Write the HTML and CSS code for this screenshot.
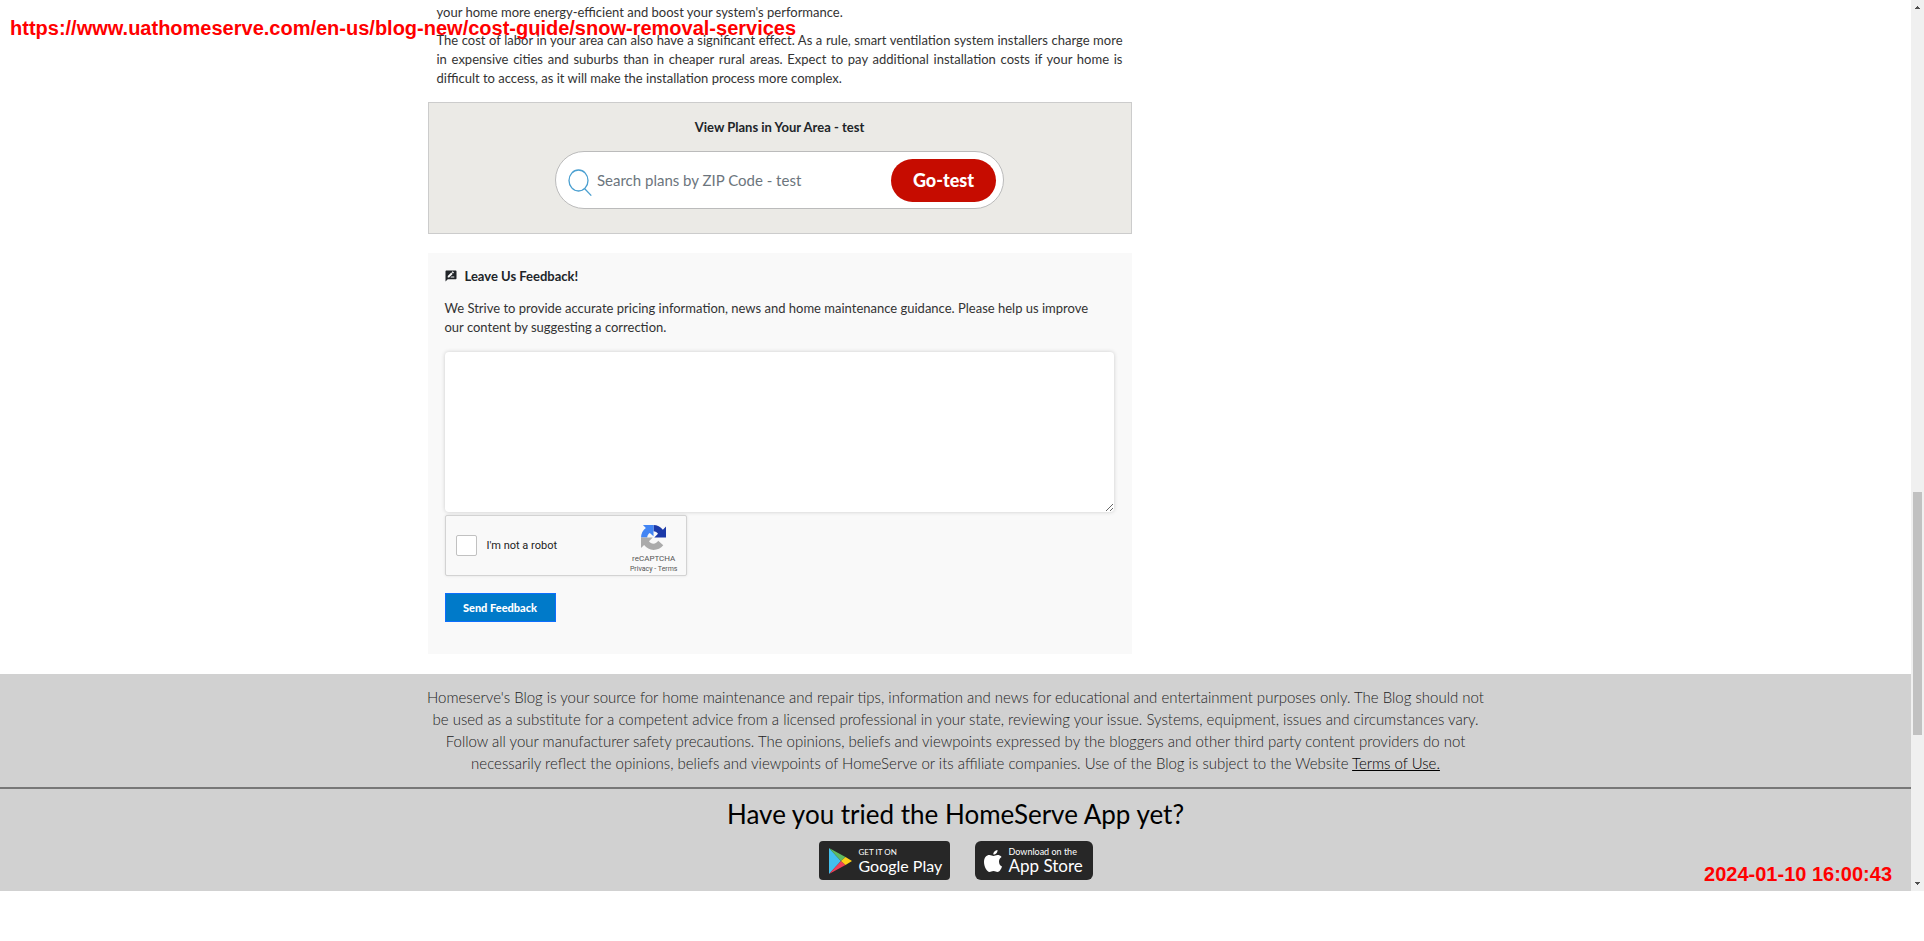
FILE: index.html
```html
<!DOCTYPE html>
<html lang="en">
<head>
<meta charset="utf-8">
<title>HomeServe Cost Guide</title>
<link rel="stylesheet" href="styles.css">
</head>
<body>
<div class="shell">
  <div class="page">
    <main class="container">
      <article class="article">
        <div class="copy">
          <p>prices, and the right system may pay for itself over a few years by helping to improve upgrades. You can make<br>your home more energy-efficient and boost your system's performance.</p>
          <p>The cost of labor in your area can also have a significant effect. As a rule, smart ventilation system installers charge more in expensive cities and suburbs than in cheaper rural areas. Expect to pay additional installation costs if your home is difficult to access, as it will make the installation process more complex.</p>
        </div>
        <section class="plans">
          <h2 class="box-title">View Plans in Your Area - test</h2>
          <form class="search">
            <svg class="search-icon" viewBox="0 0 24 27" fill="none" stroke="#4a9fd0" stroke-width="1.3"><ellipse cx="10.5" cy="11.5" rx="9.5" ry="10.5"/><path d="M16.5 19.5L23.3 26.6"/></svg>
            <input class="search-input" type="text" aria-label="ZIP Code" placeholder="Search plans by ZIP Code - test">
            <button class="go" type="button">Go-test</button>
          </form>
        </section>
        <form class="feedback">
          <h2 class="box-title feedback-title">
            <svg class="feedback-icon" viewBox="0 0 24 24" fill="#212529"><path d="M21 1H3C1.900 1 1 1.900 1 3V23L5.500 18.500H21C22.100 18.500 23 17.600 23 16.500V3C23 1.900 22.100 1 21 1ZM5.500 15V12.200L12.500 5.200L15.300 8L8.300 15ZM16.200 7.100L13.400 4.300L14.800 2.900C15.100 2.600 15.500 2.600 15.800 2.900L17.600 4.700C17.900 5 17.900 5.400 17.600 5.700ZM18.500 15H10.800L12.800 13H18.500Z"/></svg>
            <label for="comment">Leave Us Feedback!</label>
          </h2>
          <p class="feedback-text">We Strive to provide accurate pricing information, news and home maintenance guidance. Please help us improve<br>our content by suggesting a correction.</p>
          <textarea class="comment" id="comment"></textarea>
          <div class="captcha">
            <label class="robot"><input class="robot-box" type="checkbox">I'm not a robot</label>
            <div class="captcha-brand">
              <svg class="captcha-logo" viewBox="0 0 64 64"><path fill="#1c3aa9" d="M64 32V4l-8 8C50 5 41.500 0 32 0v16c5 0 9 3 11.500 6.500L34 32Z"/><path fill="#4285f4" d="M32 0H5l7.500 7.500C5 13 0 21.500 0 32h16c0-5 2.500-9 6.500-11.500L32 29Z"/><path fill="#ababab" d="M0 32v27l8-7.500C14 59 22.500 64 32 64c10 0 19-4.500 25-12L44 40.500C41 45 37 48 32 48s-9-3-11.500-6.500L30 32Z"/></svg>
              <span class="captcha-name">reCAPTCHA</span>
              <span class="captcha-links"><a href="#">Privacy</a> - <a href="#">Terms</a></span>
            </div>
          </div>
          <button class="send" type="button">Send Feedback</button>
        </form>
      </article>
    </main>
    <footer class="footer">
      <p class="disclaimer">Homeserve's Blog is your source for home maintenance and repair tips, information and news for educational and entertainment purposes only. The Blog should not<br>be used as a substitute for a competent advice from a licensed professional in your state, reviewing your issue. Systems, equipment, issues and circumstances vary.<br>Follow all your manufacturer safety precautions. The opinions, beliefs and viewpoints expressed by the bloggers and other third party content providers do not<br>necessarily reflect the opinions, beliefs and viewpoints of HomeServe or its affiliate companies. Use of the Blog is subject to the Website <a href="#">Terms of Use.</a></p>
      <div class="apps">
        <h2 class="apps-title">Have you tried the HomeServe App yet?</h2>
        <div class="badges">
          <a class="badge badge-google" href="#">
            <svg class="play-icon" viewBox="0 0 24 26"><path fill="#43c0ee" d="M1 0L13 13L1 26Z"/><path fill="#5fbb62" d="M1 0L17.500 9L13 13Z"/><path fill="#f04058" d="M1 26L17.500 17L13 13Z"/><path fill="#fdd017" d="M17.500 9L24 13L17.500 17L13 13Z"/></svg>
            <span class="badge-text"><span class="badge-small">GET IT ON</span><span class="badge-big">Google Play</span></span>
          </a>
          <a class="badge badge-apple" href="#">
            <svg class="apple-icon" viewBox="0 0 18 22" fill="#fff"><path d="M15 11.500c0-2.300 1.200-3.600 2.600-4.500C16.500 5.500 15 5 13.500 5c-1.700 0-3 1-4 1S7 5 5.500 5C2.500 5 0 7.500 0 12c0 4.500 3 10 5.500 10 1.500 0 2-.9 4-.9s2.500.9 4 .9c2 0 3.700-3 4.500-5.500-1.800-.8-3-2.500-3-5Z"/><path d="M13.500 0c.2 2.500-1.800 4.600-4.200 4.500C9 2.300 11.200.200 13.500 0Z"/></svg>
            <span class="badge-text"><span class="badge-small badge-wide">Download on the</span><span class="badge-big badge-store">App Store</span></span>
          </a>
        </div>
      </div>
    </footer>
  </div>
  <div class="scrollbar" aria-hidden="true">
    <svg class="arrow" viewBox="0 0 5 3"><path d="M0 3V2H1V1H2V0H3V1H4V2H5V3Z"/></svg>
    <div class="track"><div class="thumb"></div></div>
    <svg class="arrow" viewBox="0 0 5 3"><path d="M0 0V1H1V2H2V3H3V2H4V1H5V0Z"/></svg>
  </div>
  <div class="stamp stamp-url">https://www.uathomeserve.com/en-us/blog-new/cost-guide/snow-removal-services</div>
  <div class="stamp stamp-time">2024-01-10 16:00:43</div>
</div>
</body>
</html>
```
FILE: styles.css
```css
* { box-sizing: border-box; }
body { margin: 0; overflow: hidden; background: #fff; color: #333; font-family: Lato, "Open Sans", sans-serif; font-size: 13px; line-height: 19px; }
h2, p { margin: 0; }
button, input, textarea { font-family: inherit; }
.shell { position: relative; display: flex; overflow: hidden; }
.page { flex: 1; min-width: 0; }
.container { max-width: 1056px; margin: 0 auto; display: grid; grid-template-columns: 2fr 1fr; }
.copy { margin-top: -16px; padding: 0 9px; text-align: justify; }
.copy p { margin-bottom: 9px; line-height: 19px; }
.plans { margin-top: 14px; padding: 14px 0 24px; border: 1px solid #ccc; background: #ebeae6; }
.box-title { font-size: 13px; line-height: 20px; font-weight: 700; color: #212529; }
.plans .box-title { text-align: center; }
.search { display: flex; align-items: center; width: 449px; height: 58px; margin: 14px auto 0; padding: 0 7px 0 12px; border: 1px solid #bbb; border-radius: 29px; background: #fff; }
.search-icon { width: 24px; height: 27px; margin-top: 4px; }
.search-input { flex: 1; min-width: 0; border: 0; padding: 0 5px; background: none; font-size: 15px; outline: 0; }
.search-input::placeholder { color: #6c757d; }
.go { width: 105px; height: 43px; border: 0; border-radius: 22px; background: #c60c00; color: #fff; font-size: 18px; font-weight: 900; }
.feedback { margin-top: 19px; padding: 13px 18px 32px 17px; background: #f9f9f9; }
.feedback-title { display: flex; align-items: center; gap: 8px; }
.feedback-icon { width: 12px; height: 12px; }
.feedback-text { margin: 13px 0 15px; line-height: 19px; }
.comment { display: block; width: 100%; height: 160px; border: 0; border-radius: 4px; background: #fff; box-shadow: 0 0 4px rgba(0,0,0,.18); resize: vertical; }
.captcha { display: flex; justify-content: space-between; width: 242px; height: 61px; margin-top: 3px; padding: 0 8px 0 10px; border: 1px solid #d3d3d3; border-radius: 2px; background: #f9f9f9; box-shadow: 0 0 3px rgba(0,0,0,.1); font-family: Roboto, sans-serif; color: #222; }
.robot { display: flex; align-items: center; gap: 10px; font-size: 11px; }
.robot-box { appearance: none; width: 21px; height: 21px; margin: 0; border: 1px solid #c1c1c1; border-radius: 2px; background: #fff; }
.captcha-brand { display: flex; flex-direction: column; align-items: center; padding-top: 9px; color: #555; }
.captcha-logo { width: 25px; height: 25px; }
.captcha-name { margin-top: 4px; font-size: 8px; line-height: 10px; }
.captcha-links { font-size: 7px; line-height: 10px; }
.captcha-links a { color: inherit; text-decoration: none; }
.send { display: block; width: 111px; height: 29px; margin-top: 17px; border: 1px solid #0d6efd; background: #007ac9; color: #fff; font-size: 11px; font-weight: 900; }
.footer { margin-top: 20px; background: #d1d1d1; text-align: center; }
.disclaimer { max-width: 1080px; margin: 0 auto; padding: 12px 0 13px; color: #222; font-size: 15px; line-height: 22px; font-weight: 300; }
.disclaimer a { color: #000; }
.apps { border-top: 2px solid #777; padding: 9px 0 11px; }
.apps-title { color: #000; font-size: 26px; line-height: 32px; font-weight: 400; }
.badges { display: flex; justify-content: center; gap: 25px; margin-top: 11px; }
.badge { display: flex; align-items: center; height: 39px; border-radius: 4px; background: #272727; color: #fff; text-decoration: none; text-align: left; }
.badge-google { width: 131px; padding-left: 9px; gap: 7px; }
.badge-apple { width: 118px; padding-left: 9px; gap: 7px; border-radius: 6px; }
.play-icon { width: 24px; height: 26px; }
.apple-icon { width: 18px; height: 22px; }
.badge-text { display: flex; flex-direction: column; white-space: nowrap; }
.badge-small { font-size: 8px; line-height: 10px; }
.badge-wide { font-size: 9px; }
.badge-big { font-size: 16px; line-height: 18px; }
.badge-store { font-size: 17px; }
.scrollbar { display: flex; flex-direction: column; align-items: center; width: 13px; padding: 6px 0; background: #f0f0f0; }
.arrow { width: 5px; height: 3px; fill: #505050; }
.track { flex: 1; display: grid; grid-template-rows: 482fr 243fr 147fr; width: 9px; }
.thumb { grid-row: 2; background: #c1c1c1; }
.stamp { position: absolute; color: #f00; font-family: "Liberation Sans", Arial, sans-serif; font-weight: 700; font-size: 20px; line-height: 24px; white-space: nowrap; }
.stamp-url { left: 10px; top: 16px; }
.stamp-time { right: 32px; bottom: 5px; }
```
